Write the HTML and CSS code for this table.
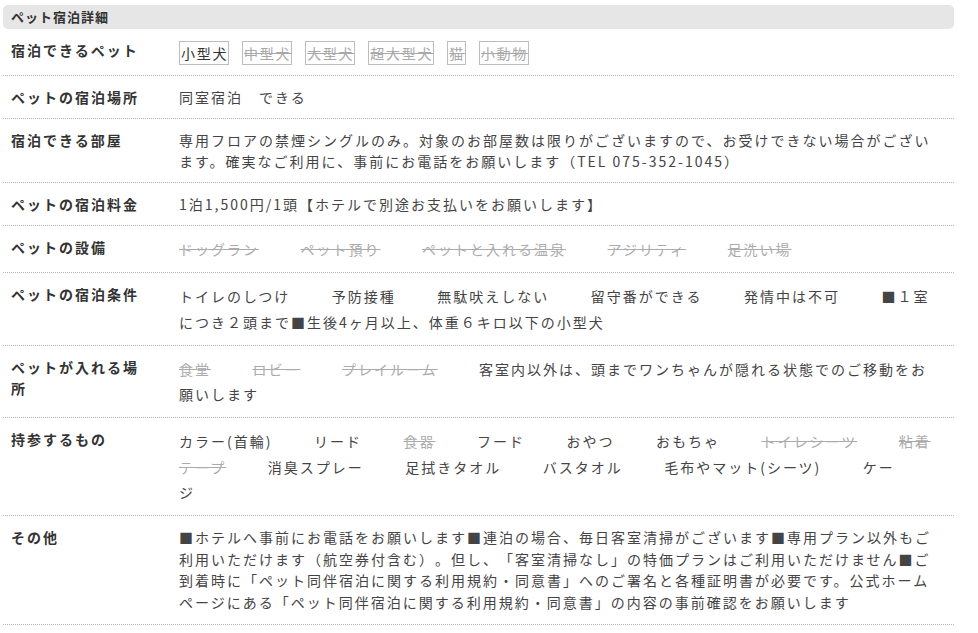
FILE: index.html
```html
<!DOCTYPE html>
<html lang="ja">
<head>
<meta charset="utf-8">
<title>ペット宿泊詳細</title>
<link rel="stylesheet" href="styles.css">
</head>
<body>
<section class="section">
  <h2 class="section-title">ペット宿泊詳細</h2>
  <dl class="rows">
    <div class="row">
      <dt class="label">宿泊できるペット</dt>
      <dd class="value tags">
        <span class="tag">小型犬</span>
        <span class="tag off">中型犬</span>
        <span class="tag off">大型犬</span>
        <span class="tag off">超大型犬</span>
        <span class="tag off">猫</span>
        <span class="tag off">小動物</span>
      </dd>
    </div>
    <div class="row">
      <dt class="label">ペットの宿泊場所</dt>
      <dd class="value">同室宿泊　できる</dd>
    </div>
    <div class="row">
      <dt class="label">宿泊できる部屋</dt>
      <dd class="value">専用フロアの禁煙シングルのみ。対象のお部屋数は限りがございますので、お受けできない場合がございます。確実なご利用に、事前にお電話をお願いします（TEL 075-352-1045）</dd>
    </div>
    <div class="row">
      <dt class="label">ペットの宿泊料金</dt>
      <dd class="value">1泊1,500円/1頭【ホテルで別途お支払いをお願いします】</dd>
    </div>
    <div class="row">
      <dt class="label">ペットの設備</dt>
      <dd class="value list"><span class="item off">ドッグラン</span><span class="item off">ペット預り</span><span class="item off">ペットと入れる温泉</span><span class="item off">アジリティ</span><span class="item off">足洗い場</span></dd>
    </div>
    <div class="row">
      <dt class="label">ペットの宿泊条件</dt>
      <dd class="value list"><span class="item">トイレのしつけ</span><span class="item">予防接種</span><span class="item">無駄吠えしない</span><span class="item">留守番ができる</span><span class="item">発情中は不可</span><span class="item">■１室につき２頭まで■生後4ヶ月以上、体重６キロ以下の小型犬</span></dd>
    </div>
    <div class="row">
      <dt class="label">ペットが入れる場所</dt>
      <dd class="value list"><span class="item off">食堂</span><span class="item off">ロビー</span><span class="item off">プレイルーム</span><span class="item">客室内以外は、頭までワンちゃんが隠れる状態でのご移動をお願いします</span></dd>
    </div>
    <div class="row">
      <dt class="label">持参するもの</dt>
      <dd class="value list"><span class="item">カラー(首輪)</span><span class="item">リード</span><span class="item off">食器</span><span class="item">フード</span><span class="item">おやつ</span><span class="item">おもちゃ</span><span class="item off">トイレシーツ</span><span class="item off">粘着テープ</span><span class="item">消臭スプレー</span><span class="item">足拭きタオル</span><span class="item">バスタオル</span><span class="item">毛布やマット(シーツ)</span><span class="item">ケージ</span></dd>
    </div>
    <div class="row">
      <dt class="label">その他</dt>
      <dd class="value note">■ホテルへ事前にお電話をお願いします■連泊の場合、毎日客室清掃がございます■専用プラン以外もご<br>利用いただけます（航空券付含む）。但し、「客室清掃なし」の特価プランはご利用いただけません■ご<br>到着時に「ペット同伴宿泊に関する利用規約・同意書」へのご署名と各種証明書が必要です。公式ホーム<br>ページにある「ペット同伴宿泊に関する利用規約・同意書」の内容の事前確認をお願いします</dd>
    </div>
  </dl>
</section>
</body>
</html>
```
FILE: styles.css
```css
html, body {
  margin: 0;
  padding: 0;
  background: #fff;
}

body {
  font-family: "Noto Sans CJK JP", "Noto Sans", "DejaVu Sans", sans-serif;
  color: #333;
  text-spacing-trim: space-all;
}

.section {
  margin: 5px 0 0 3px;
  width: 951px;
}

.section-title {
  margin: 0;
  height: 24px;
  line-height: 24px;
  padding-left: 8px;
  background: #e6e6e6;
  border-radius: 5px;
  font-size: 13px;
  font-weight: bold;
  letter-spacing: 1px;
  color: #333;
}

.rows {
  margin: 0;
}

.row {
  display: grid;
  grid-template-columns: 176px 1fr;
  border-bottom: 1px dotted #b4b4b4;
}

.label {
  margin: 0;
  padding: 11px 28px 10px 8px;
  font-size: 14px;
  font-weight: bold;
  line-height: 21px;
  letter-spacing: 2px;
  color: #333;
}

.value {
  margin: 0;
  padding: 11px 17px 10px 0;
  font-size: 14px;
  line-height: 21px;
  letter-spacing: 2px;
  color: #444;
}

.tags {
  display: flex;
  flex-wrap: wrap;
  gap: 13px;
  padding-top: 12px;
}

.tag {
  display: inline-block;
  border: 1px solid #bdbdbd;
  padding: 0 0 0 1px;
  line-height: 22px;
  letter-spacing: 1.7px;
  color: #333;
}

.tag.off {
  color: #a8a8a8;
  text-decoration: line-through;
}

.list {
  line-height: 25.25px;
}

.item {
  margin-right: 41.5px;
}

.item.off {
  color: #ababab;
  text-decoration: line-through;
}

.note {
  padding-top: 11px;
  padding-bottom: 11px;
  line-height: 21.5px;
}
```
